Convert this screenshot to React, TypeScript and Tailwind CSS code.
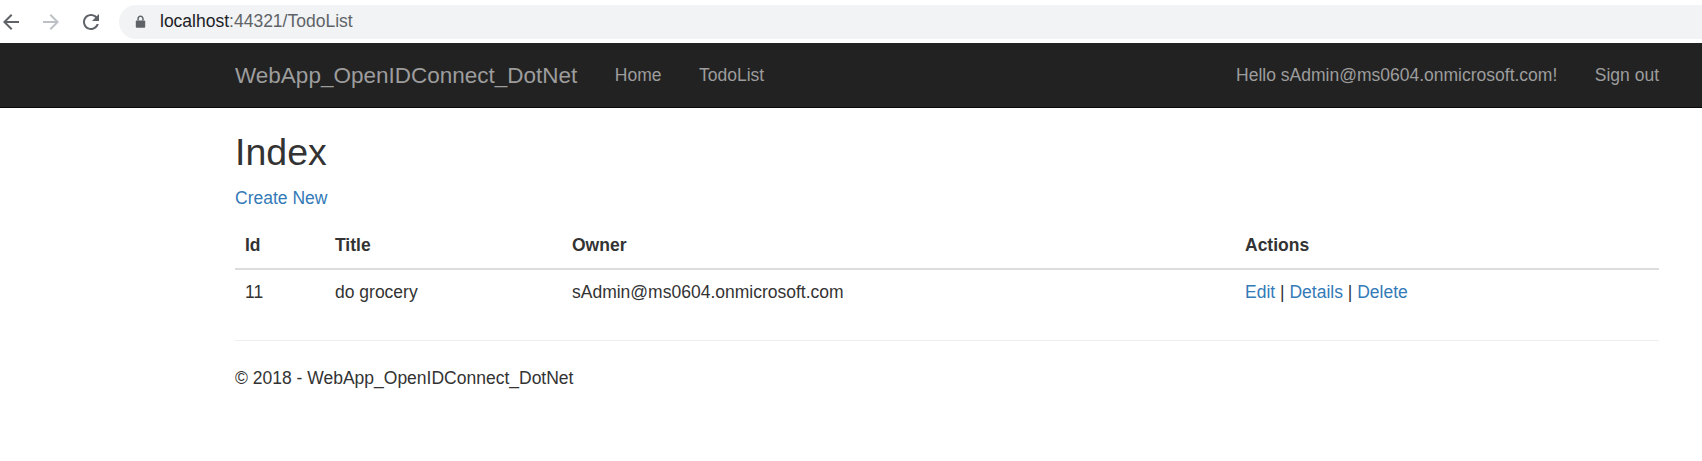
import React from "react";

const font = { fontFamily: '"Liberation Sans", Arial, Helvetica, sans-serif' };

function ChromeBar() {
  return (
    <div className="h-[43px] bg-white flex items-center overflow-hidden">
      <div className="flex items-center gap-[16px] ml-[-1px] w-[120px]">
        <svg width="24" height="24" viewBox="0 0 24 24" fill="#5f6368">
          <path d="M20 11H7.83l5.59-5.59L12 4l-8 8 8 8 1.41-1.41L7.83 13H20v-2z" />
        </svg>
        <svg width="24" height="24" viewBox="0 0 24 24" fill="#bdc1c6">
          <path d="M12 4l-1.41 1.41L16.17 11H4v2h12.17l-5.58 5.59L12 20l8-8z" />
        </svg>
        <svg width="24" height="24" viewBox="0 0 24 24" fill="#5f6368">
          <path d="M17.65 6.35C16.2 4.9 14.21 4 12 4c-4.42 0-7.99 3.58-7.99 8s3.57 8 7.99 8c3.73 0 6.84-2.55 7.73-6h-2.08c-.82 2.33-3.04 4-5.65 4-3.31 0-6-2.69-6-6s2.69-6 6-6c1.66 0 3.14.69 4.22 1.78L13 11h7V4l-2.35 2.35z" />
        </svg>
      </div>
      <div className="flex-1 h-[34px] bg-[#f1f3f4] rounded-l-full flex items-center">
        <svg className="ml-[16px]" width="11" height="13" viewBox="0 0 11 13" fill="#5f6368">
          <path d="M2.3 5.5V3.8C2.3 2 3.7 0.6 5.5 0.6S8.7 2 8.7 3.8v1.7h-1.5V3.8c0-1-0.8-1.7-1.7-1.7S3.8 2.8 3.8 3.8v1.7z" />
          <rect x="0.8" y="5.5" width="9.4" height="7.2" rx="1" />
        </svg>
        <span className="ml-[14px] text-[17.5px] leading-none text-[#202124]" style={font}>
          localhost<span className="text-[#5f6368]">:44321/TodoList</span>
        </span>
      </div>
    </div>
  );
}

function NavBar() {
  return (
    <div className="h-[65px] bg-[#222222] border-b border-[#080808]">
      <div className="ml-[235px] w-[1424px] h-full flex items-center text-[#9d9d9d]" style={font}>
        <span className="text-[22.5px] leading-[25px] pr-[18.75px]">WebApp_OpenIDConnect_DotNet</span>
        <span className="text-[17.5px] leading-[25px] px-[18.75px]">Home</span>
        <span className="text-[17.5px] leading-[25px] px-[18.75px]">TodoList</span>
        <div className="ml-auto flex items-center">
          <span className="text-[17.5px] leading-[25px] mr-[37.5px]">Hello sAdmin@ms0604.onmicrosoft.com!</span>
          <span className="text-[17.5px] leading-[25px]">Sign out</span>
        </div>
      </div>
    </div>
  );
}

export default function App() {
  return (
    <div className="w-full min-h-[461px] bg-white" style={font}>
      <ChromeBar />
      <NavBar />
      <div className="ml-[235px] w-[1424px] text-[#333333] text-[17.5px] leading-[25px]">
        <h2 className="mt-[24px] mb-[12.5px] text-[37.5px] leading-[1.1] font-normal">Index</h2>
        <p className="mb-[12.5px]">
          <a className="text-[#337ab7]">Create New</a>
        </p>
        <table className="w-full table-fixed border-collapse">
          <colgroup>
            <col className="w-[90px]" />
            <col className="w-[237px]" />
            <col className="w-[673px]" />
            <col />
          </colgroup>
          <thead>
            <tr>
              <th className="text-left font-bold p-[10px] border-b-2 border-[#dddddd]">Id</th>
              <th className="text-left font-bold p-[10px] border-b-2 border-[#dddddd]">Title</th>
              <th className="text-left font-bold p-[10px] border-b-2 border-[#dddddd]">Owner</th>
              <th className="text-left font-bold p-[10px] border-b-2 border-[#dddddd]">Actions</th>
            </tr>
          </thead>
          <tbody>
            <tr>
              <td className="p-[10px]">11</td>
              <td className="p-[10px]">do grocery</td>
              <td className="p-[10px]">sAdmin@ms0604.onmicrosoft.com</td>
              <td className="p-[10px]">
                <a className="text-[#337ab7]">Edit</a> | <a className="text-[#337ab7]">Details</a> |{" "}
                <a className="text-[#337ab7]">Delete</a>
              </td>
            </tr>
          </tbody>
        </table>
        <hr className="mt-[25px] mb-[25px] border-t border-[#eeeeee]" />
        <p>© 2018 - WebApp_OpenIDConnect_DotNet</p>
      </div>
    </div>
  );
}
